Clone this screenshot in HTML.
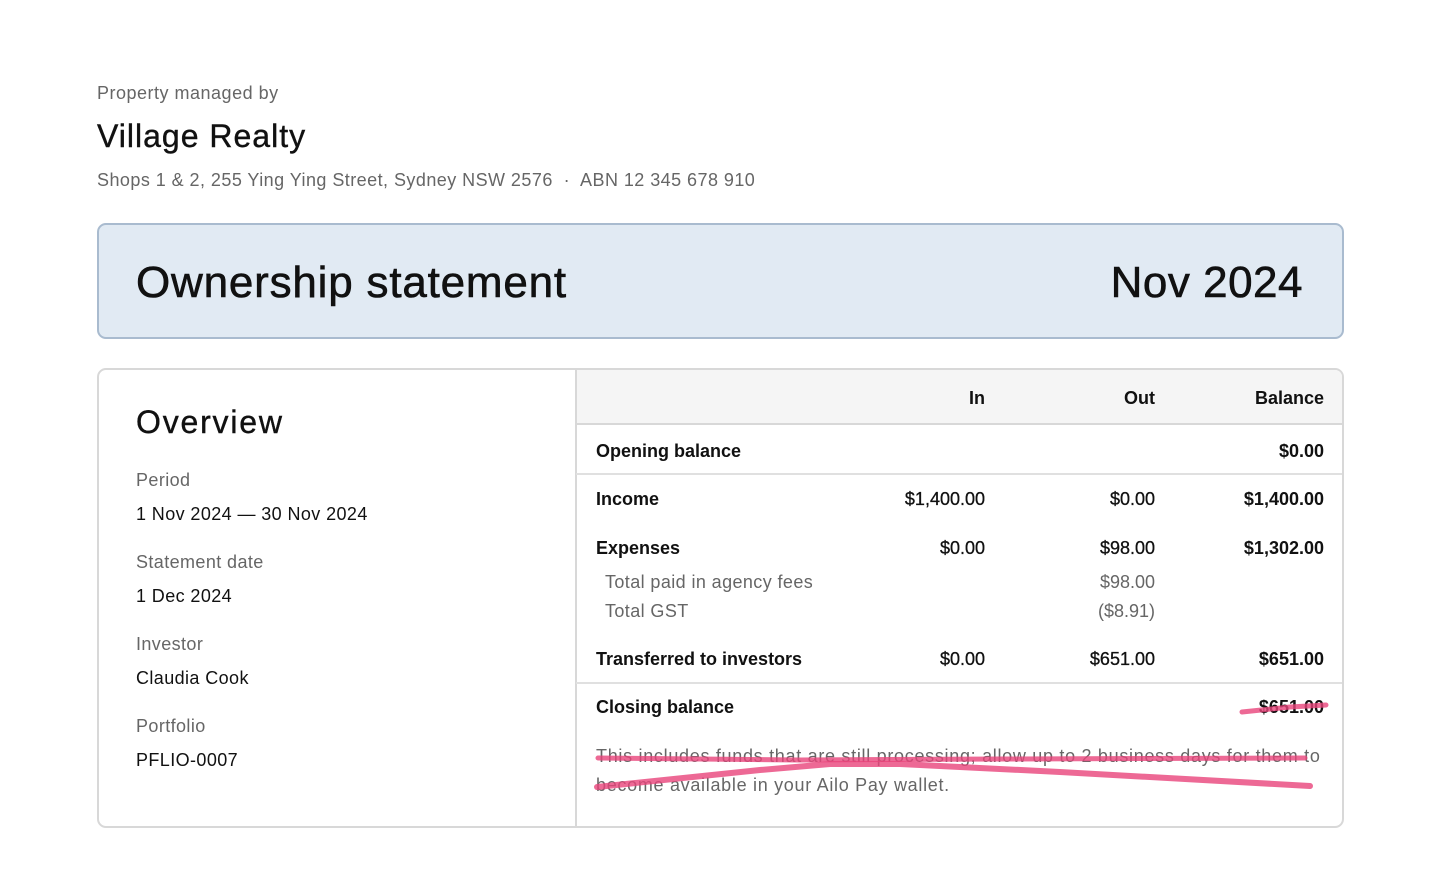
<!DOCTYPE html>
<html><head><meta charset="utf-8"><style>
*{margin:0;padding:0;box-sizing:border-box}
body{width:1440px;height:895px;background:#fff;font-family:"Liberation Sans",Arial,sans-serif;color:#111;position:relative;overflow:hidden}
.a{position:absolute;white-space:nowrap;line-height:1}
.g{color:#666}
.r{text-align:right}
.b{font-weight:bold}
</style></head><body>
<div class="a g" style="left:97px;top:84px;font-size:18px;letter-spacing:0.5px">Property managed by</div>
<div class="a" style="left:97px;top:120px;font-size:32px;letter-spacing:1px;-webkit-text-stroke:0.4px #111">Village Realty</div>
<div class="a g" style="left:97px;top:171px;font-size:18px;letter-spacing:0.45px">Shops 1 &amp; 2, 255 Ying Ying Street, Sydney NSW 2576 &nbsp;·&nbsp; ABN 12 345 678 910</div>

<div class="a" style="left:97px;top:223px;width:1247px;height:116px;background:#e1eaf3;border:2px solid #a9bbcf;border-radius:9px"></div>
<div class="a" style="left:136px;top:261px;font-size:44px;letter-spacing:0.8px;-webkit-text-stroke:0.6px #111">Ownership statement</div>
<div class="a r" style="right:137px;top:261px;font-size:44px;letter-spacing:0.5px;-webkit-text-stroke:0.6px #111">Nov 2024</div>

<div class="a" style="left:97px;top:368px;width:1247px;height:460px;border:2px solid #d8d8d8;border-radius:9px;overflow:hidden">
 <div style="position:absolute;left:477px;top:0;width:768px;height:55px;background:#f5f5f5;border-bottom:2px solid #d8d8d8"></div>
 <div style="position:absolute;left:476px;top:0;width:2px;height:460px;background:#d8d8d8"></div>
 <div style="position:absolute;left:477px;top:103px;width:768px;height:2px;background:#e0e0e0"></div>
 <div style="position:absolute;left:477px;top:312px;width:768px;height:2px;background:#e0e0e0"></div>
</div>

<div class="a" style="left:136px;top:406px;font-size:32px;letter-spacing:1.8px;-webkit-text-stroke:0.4px #111">Overview</div>
<div style="font-size:18px;letter-spacing:0.4px">
<div class="a g" style="left:136px;top:471px">Period</div>
<div class="a" style="left:136px;top:505px">1 Nov 2024 — 30 Nov 2024</div>
<div class="a g" style="left:136px;top:553px">Statement date</div>
<div class="a" style="left:136px;top:587px">1 Dec 2024</div>
<div class="a g" style="left:136px;top:635px">Investor</div>
<div class="a" style="left:136px;top:669px">Claudia Cook</div>
<div class="a g" style="left:136px;top:717px">Portfolio</div>
<div class="a" style="left:136px;top:751px">PFLIO-0007</div>
</div>

<div style="font-size:18px">
<div class="a r b" style="right:455px;top:389px">In</div>
<div class="a r b" style="right:285px;top:389px">Out</div>
<div class="a r b" style="right:116px;top:389px">Balance</div>

<div class="a b" style="left:596px;top:442px">Opening balance</div>
<div class="a r b" style="right:116px;top:442px">$0.00</div>

<div class="a b" style="left:596px;top:490px">Income</div>
<div class="a r" style="right:455px;top:490px;-webkit-text-stroke:0.3px #111">$1,400.00</div>
<div class="a r" style="right:285px;top:490px;-webkit-text-stroke:0.3px #111">$0.00</div>
<div class="a r b" style="right:116px;top:490px">$1,400.00</div>

<div class="a b" style="left:596px;top:539px">Expenses</div>
<div class="a r" style="right:455px;top:539px;-webkit-text-stroke:0.3px #111">$0.00</div>
<div class="a r" style="right:285px;top:539px;-webkit-text-stroke:0.3px #111">$98.00</div>
<div class="a r b" style="right:116px;top:539px">$1,302.00</div>
<div class="a g" style="left:605px;top:573px;letter-spacing:0.4px">Total paid in agency fees</div>
<div class="a r g" style="right:285px;top:573px">$98.00</div>
<div class="a g" style="left:605px;top:602px;letter-spacing:0.4px">Total GST</div>
<div class="a r g" style="right:285px;top:602px">($8.91)</div>

<div class="a b" style="left:596px;top:650px">Transferred to investors</div>
<div class="a r" style="right:455px;top:650px;-webkit-text-stroke:0.3px #111">$0.00</div>
<div class="a r" style="right:285px;top:650px;-webkit-text-stroke:0.3px #111">$651.00</div>
<div class="a r b" style="right:116px;top:650px">$651.00</div>

<div class="a b" style="left:596px;top:698px">Closing balance</div>
<div class="a r b" style="right:116px;top:698px">$651.00</div>

<div class="a g" style="left:596px;top:747px;letter-spacing:0.7px">This includes funds that are still processing; allow up to 2 business days for them to</div>
<div class="a g" style="left:596px;top:776px;letter-spacing:0.7px">become available in your Ailo Pay wallet.</div>
</div>

<svg class="a" style="left:0;top:0" width="1440" height="895">
<g stroke="#e9437a" stroke-opacity="0.8" stroke-linecap="round" fill="none" stroke-width="5">
<path d="M1242 712 L1290 707 L1326 705"/>
<path d="M598 758 L800 760 L1000 759 L1305 758"/>
<path d="M597 787 L760 770 L830 764 L900 764 L1060 772 L1310 786" stroke-width="6"/>
</g>
</svg>
</body></html>
